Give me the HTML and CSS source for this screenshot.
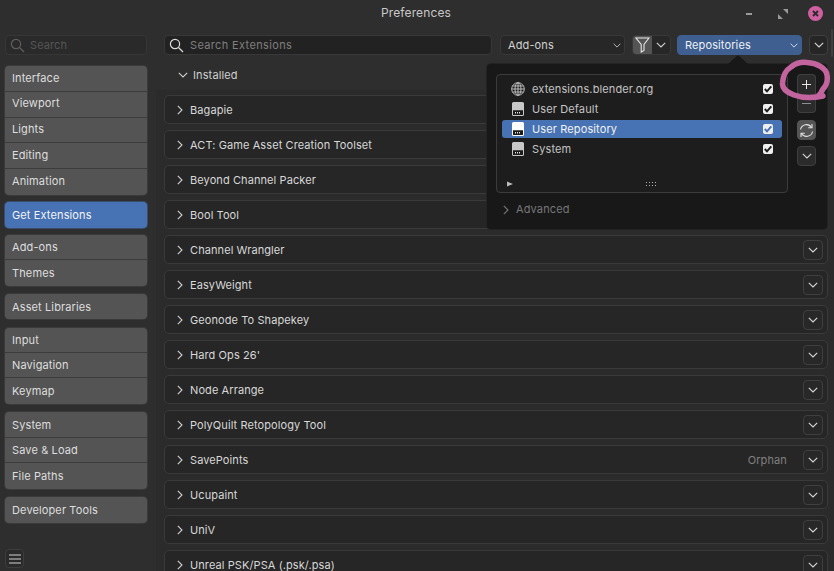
FILE: index.html
```html
<!DOCTYPE html>
<html lang="en">
<head>
<meta charset="utf-8">
<title>Preferences</title>
<link rel="stylesheet" href="styles.css">
</head>
<body>
<svg class="defs" width="0" height="0">
  <symbol id="down" viewBox="0 0 10 6"><path d="M.8.8 5 5 9.200.8" fill="none" stroke="currentColor" stroke-width="1.100"/></symbol>
  <symbol id="right" viewBox="0 0 6 10"><path d="M.8.8 5 5 .8 9.200" fill="none" stroke="currentColor" stroke-width="1.100"/></symbol>
  <symbol id="search" viewBox="0 0 15 15"><circle cx="6" cy="6" r="4.600" fill="none" stroke="currentColor" stroke-width="1.200"/><path d="m9.500 9.500 4.500 4.500" stroke="currentColor" stroke-width="1.300"/></symbol>
  <symbol id="disk" viewBox="0 0 12 14"><path d="M1.500 0h9A1.500 1.500 0 0 1 12 1.500v11a1.500 1.500 0 0 1-1.500 1.500h-9A1.500 1.500 0 0 1 0 12.500v-11A1.500 1.500 0 0 1 1.500 0z" fill="currentColor"/><path d="M1 8.300h10V12.500a.5.5 0 0 1-.5.5h-9a.5.5 0 0 1-.5-.5z" fill="#1b1b1b"/><path d="M3 10h1v1.600H3zM5 10h1v1.600H5zM7 10h1v1.600H7z" fill="#e6e6e6"/></symbol>
  <symbol id="check" viewBox="0 0 10 10"><path d="M1.800 5 4 7.400 8.300 2.400" fill="none" stroke="currentColor" stroke-width="1.900"/></symbol>
</svg>
<div class="window">
  <header class="titlebar">
    <h1 class="title">Preferences</h1>
    <div class="winctl">
      <svg class="ctl" width="12" height="12" viewBox="0 0 12 12"><path d="M0 6h6" stroke="#9a9a9a" stroke-width="2"/></svg>
      <svg class="ctl" width="12" height="12" viewBox="0 0 12 12"><path d="M6 1h5v5zM1 6v5h5z" fill="#9a9a9a"/></svg>
      <svg class="close" width="15" height="15" viewBox="0 0 15 15"><circle cx="7.500" cy="7.500" r="7.500" fill="#cf609f"/><path d="m5 5 5 5m0-5-5 5" stroke="#2a2a2a" stroke-width="1.800"/></svg>
    </div>
  </header>
  <div class="body">
    <aside class="sidebar">
      <div class="field side-search">
        <svg class="ico-search" width="15" height="15"><use href="#search"/></svg>
        <span class="ph">Search</span>
      </div>
      <nav class="tabs">
        <div class="group first"><span class="tab">Interface</span><span class="tab">Viewport</span><span class="tab">Lights</span><span class="tab">Editing</span><span class="tab">Animation</span></div>
        <div class="group active"><span class="tab">Get Extensions</span></div>
        <div class="group"><span class="tab">Add-ons</span><span class="tab">Themes</span></div>
        <div class="group"><span class="tab">Asset Libraries</span></div>
        <div class="group"><span class="tab">Input</span><span class="tab">Navigation</span><span class="tab">Keymap</span></div>
        <div class="group system"><span class="tab">System</span><span class="tab">Save &amp; Load</span><span class="tab">File Paths</span></div>
        <div class="group dev"><span class="tab">Developer Tools</span></div>
      </nav>
      <button class="menu-btn" aria-label="Menu"><svg width="12" height="10" viewBox="0 0 12 10"><path d="M0 1h12M0 5h12M0 9h12" stroke="#d0d0d0" stroke-width="1"/></svg></button>
    </aside>
    <main class="main">
      <div class="toolbar">
        <div class="field main-search">
          <svg class="ico-search bright" width="15" height="15"><use href="#search"/></svg>
          <span class="ph">Search Extensions</span>
        </div>
        <div class="field select addons"><span>Add-ons</span><svg class="chev" width="8" height="5"><use href="#down"/></svg></div>
        <div class="filter">
          <span class="filter-ico"><svg width="15" height="16" viewBox="0 0 15 16"><path d="M1 1h13L9 7.500V13.500L6.200 15V7.500z" fill="none" stroke="#e6e6e6" stroke-width="1.100"/></svg></span>
          <span class="filter-more"><svg width="10" height="6"><use href="#down"/></svg></span>
        </div>
        <div class="field select repos"><span>Repositories</span><svg class="chev" width="8" height="5"><use href="#down"/></svg></div>
        <button class="icon-btn top-more"><svg width="10" height="6"><use href="#down"/></svg></button>
      </div>
      <div class="section-head"><svg width="10" height="6"><use href="#down"/></svg><span>Installed</span></div>
      <div class="rows">
        <div class="row"><svg class="r-chev" width="6" height="10"><use href="#right"/></svg><span class="r-name">Bagapie</span><button class="icon-btn"><svg width="10" height="6"><use href="#down"/></svg></button></div>
        <div class="row"><svg class="r-chev" width="6" height="10"><use href="#right"/></svg><span class="r-name">ACT: Game Asset Creation Toolset</span><button class="icon-btn"><svg width="10" height="6"><use href="#down"/></svg></button></div>
        <div class="row"><svg class="r-chev" width="6" height="10"><use href="#right"/></svg><span class="r-name">Beyond Channel Packer</span><button class="icon-btn"><svg width="10" height="6"><use href="#down"/></svg></button></div>
        <div class="row"><svg class="r-chev" width="6" height="10"><use href="#right"/></svg><span class="r-name">Bool Tool</span><button class="icon-btn"><svg width="10" height="6"><use href="#down"/></svg></button></div>
        <div class="row"><svg class="r-chev" width="6" height="10"><use href="#right"/></svg><span class="r-name">Channel Wrangler</span><button class="icon-btn"><svg width="10" height="6"><use href="#down"/></svg></button></div>
        <div class="row"><svg class="r-chev" width="6" height="10"><use href="#right"/></svg><span class="r-name">EasyWeight</span><button class="icon-btn"><svg width="10" height="6"><use href="#down"/></svg></button></div>
        <div class="row"><svg class="r-chev" width="6" height="10"><use href="#right"/></svg><span class="r-name">Geonode To Shapekey</span><button class="icon-btn"><svg width="10" height="6"><use href="#down"/></svg></button></div>
        <div class="row"><svg class="r-chev" width="6" height="10"><use href="#right"/></svg><span class="r-name">Hard Ops 26'</span><button class="icon-btn"><svg width="10" height="6"><use href="#down"/></svg></button></div>
        <div class="row"><svg class="r-chev" width="6" height="10"><use href="#right"/></svg><span class="r-name">Node Arrange</span><button class="icon-btn"><svg width="10" height="6"><use href="#down"/></svg></button></div>
        <div class="row"><svg class="r-chev" width="6" height="10"><use href="#right"/></svg><span class="r-name">PolyQuilt Retopology Tool</span><button class="icon-btn"><svg width="10" height="6"><use href="#down"/></svg></button></div>
        <div class="row"><svg class="r-chev" width="6" height="10"><use href="#right"/></svg><span class="r-name">SavePoints</span><span class="r-note">Orphan</span><button class="icon-btn"><svg width="10" height="6"><use href="#down"/></svg></button></div>
        <div class="row"><svg class="r-chev" width="6" height="10"><use href="#right"/></svg><span class="r-name">Ucupaint</span><button class="icon-btn"><svg width="10" height="6"><use href="#down"/></svg></button></div>
        <div class="row"><svg class="r-chev" width="6" height="10"><use href="#right"/></svg><span class="r-name">UniV</span><button class="icon-btn"><svg width="10" height="6"><use href="#down"/></svg></button></div>
        <div class="row"><svg class="r-chev" width="6" height="10"><use href="#right"/></svg><span class="r-name">Unreal PSK/PSA (.psk/.psa)</span><button class="icon-btn"><svg width="10" height="6"><use href="#down"/></svg></button></div>
      </div>
    </main>
  </div>

  <i class="thumb"></i>

  <section class="popup">
    <div class="popup-top">
      <div class="listbox">
        <div class="lrow"><svg class="globe" width="14" height="14" viewBox="0 0 14 14"><g fill="none" stroke="#c8c8c8" stroke-width=".9"><circle cx="7" cy="7" r="6.300"/><ellipse cx="7" cy="7" rx="3" ry="6.300"/><path d="M7 .7v12.600M.7 7h12.600M1.500 4h11M1.500 10h11"/></g></svg><span class="lname">extensions.blender.org</span><span class="cb"><svg width="10" height="10"><use href="#check"/></svg></span></div>
        <div class="lrow"><svg class="disk" width="12" height="14"><use href="#disk"/></svg><span class="lname">User Default</span><span class="cb"><svg width="10" height="10"><use href="#check"/></svg></span></div>
        <div class="lrow sel"><svg class="disk" width="12" height="14"><use href="#disk"/></svg><span class="lname">User Repository</span><span class="cb"><svg width="10" height="10"><use href="#check"/></svg></span></div>
        <div class="lrow"><svg class="disk" width="12" height="14"><use href="#disk"/></svg><span class="lname">System</span><span class="cb"><svg width="10" height="10"><use href="#check"/></svg></span></div>
        <div class="lfoot">
          <svg class="tri" width="6" height="6" viewBox="0 0 6 6"><path d="M0 .5 6 3 0 5.500z" fill="#bdbdbd"/></svg>
          <svg class="grip" width="11" height="5" viewBox="0 0 11 5"><path d="M0 0h1v1H0zM3 0h1v1H3zM6 0h1v1H6zM9 0h1v1H9zM0 3h1v1H0zM3 3h1v1H3zM6 3h1v1H6zM9 3h1v1H9z" fill="#b0b0b0"/></svg>
        </div>
      </div>
      <div class="side-btns">
        <div class="pair">
          <button class="icon-btn pb"><svg width="9" height="9" viewBox="0 0 9 9"><path d="M4.500 0v9M0 4.500h9" stroke="#e8e8e8" stroke-width="1"/></svg></button>
          <button class="icon-btn pb"><svg width="9" height="9" viewBox="0 0 9 9"><path d="M0 4.500h9" stroke="#8f8f8f" stroke-width="1"/></svg></button>
        </div>
        <button class="icon-btn pb refresh"><svg width="15" height="15" viewBox="0 0 15 15"><g fill="none" stroke="#e4e4e4" stroke-width="1.100"><path d="M1.500 6.500A6 6 0 0 1 12.500 4.500"/><path d="M13.500 8.500A6 6 0 0 1 2.500 10.500"/><path d="M13 1v3.800H9.200"/><path d="M2 14v-3.800h3.800"/></g></svg></button>
        <button class="icon-btn pb"><svg width="10" height="6"><use href="#down"/></svg></button>
      </div>
    </div>
    <div class="advanced"><svg width="6" height="10"><use href="#right"/></svg><span>Advanced</span></div>
    <i class="notch"></i>
  </section>

  <svg class="scribble" width="60" height="50" viewBox="0 0 60 50"><path d="M46 37C36 39 25 39 17 36 9 33 5 29 5.500 24 6 16 9 11 14 8 19 4 25 3 30 3.500 40 4 49 9 50 16 51 22 49 27 46 30 44 33 44 35 42 36" fill="none" stroke="#c4649e" stroke-width="5.500" stroke-linecap="round"/></svg>
</div>
</body>
</html>
```
FILE: styles.css
```css
* { box-sizing: border-box; }
html, body { margin: 0; height: 100%; }
body { background: #2e2e2e; color: #d8d8d8; font: 11px/1.2 Inter, "Liberation Sans", sans-serif; overflow: hidden; }
.defs { position: absolute; }
button { font: inherit; color: inherit; margin: 0; padding: 0; }

.window { position: relative; width: 834px; height: 571px; overflow: hidden; display: flex; flex-direction: column; }

.titlebar { height: 27px; flex: none; display: flex; align-items: center; justify-content: center; position: relative; background: #2e2e2e; }
.title { margin: 0 2px 0 0; font-size: 12px; font-weight: 400; color: #c8c8c8; letter-spacing: .12px; }
.winctl { position: absolute; top: 6px; right: 11px; display: flex; align-items: center; gap: 19px; }
.ctl { color: #9a9a9a; }

.body { flex: 1; display: flex; min-height: 0; }

.sidebar { width: 156px; flex: none; padding: 8px 9px 3px 5px; display: flex; flex-direction: column; }
.field { height: 20px; display: flex; align-items: center; background: #232323; border: 1px solid #383838; border-radius: 4px; flex: none; }
.side-search { background: #2a2a2a; border-color: #363636; padding-left: 4px; gap: 5px; }
.side-search .ico-search { color: #5f5f5f; }
.side-search .ph { color: #565656; letter-spacing: .1px; }
.ph { color: #7f7f7f; letter-spacing: .35px; padding-top: 1.500px; }
.ico-search { width: 15px; height: 15px; flex: none; color: #8a8a8a; }
.ico-search.bright { color: #dcdcdc; }

.tabs { margin-top: 11px; display: flex; flex-direction: column; gap: 8.270px; }
.group { display: flex; flex-direction: column; background: #545454; border-radius: 4px; box-shadow: 0 0 0 1px #3a3a3a; overflow: hidden; }
.tab { height: 25.400px; display: flex; align-items: center; padding: 1.500px 0 0 7px; color: #dedede; letter-spacing: .12px; border-bottom: 1px solid #3c3c3c; }
.tab:last-child { border-bottom: 0; }
.group.first .tab { height: 25.750px; padding: 0 0 .5px 7px; }
.group.active { background: #4772b3; box-shadow: 0 0 0 1px #3a4d69; margin: -.75px 0 -1px; }
.group.active .tab { color: #f4f4f4; }
.group.system { margin-top: .4px; }
.group.dev { margin-top: .6px; }

.menu-btn { margin-top: auto; width: 19px; height: 19px; background: #2a2a2a; border: 1px solid #3d3d3d; border-radius: 4px; display: flex; align-items: center; justify-content: center; }

.main { flex: 1; min-width: 0; display: flex; flex-direction: column; }
.toolbar { height: 20px; margin-top: 8px; padding: 0 6px 0 8px; display: flex; align-items: stretch; flex: none; }
.main-search { width: 328px; padding-left: 4px; gap: 6px; background: #222; }
.select { padding: 1px 3px 0 7px; justify-content: space-between; color: #d2d2d2; letter-spacing: .12px; }
.chev { color: #c8c8c8; }
.addons { width: 125px; margin-left: 8px; background: #272727; }
.filter { width: 39px; flex: none; margin-left: 7px; display: flex; border: 1px solid #383838; border-radius: 4px; overflow: hidden; background: #272727; }
.filter-ico { width: 19px; background: #545454; display: flex; align-items: center; justify-content: center; }
.filter-more { flex: 1; display: flex; align-items: center; justify-content: center; color: #d0d0d0; }
.repos { width: 125px; margin-left: 6px; background: #3f5f91; border-color: #3f5f91; color: #eef1f6; }
.repos .chev { color: #e4e8ef; }
.icon-btn { width: 20px; height: 20px; flex: none; display: flex; align-items: center; justify-content: center; background: #282828; border: 1px solid #3f3f3f; border-radius: 4px; color: #d8d8d8; }
.top-more { width: 19px; height: 20px; margin-left: 7px; background: #262626; }

.section-head { height: 35px; flex: none; padding: 7px 0 0 22px; display: flex; align-items: center; gap: 5px; color: #d0d0d0; letter-spacing: .12px; }
.section-head svg { color: #d0d0d0; margin-bottom: 2px; }

.rows { flex: 1; min-height: 0; padding: 5px 6px 0 8px; background: #2b2b2b; display: flex; flex-direction: column; gap: 6px; overflow: hidden; }
.row { height: 29px; flex: none; display: flex; align-items: center; padding: 0 4px 0 12px; background: #262626; border: 1px solid #3a3a3a; border-radius: 5px; }
.r-chev { color: #d0d0d0; margin-right: 7px; }
.r-name { flex: 1; color: #d8d8d8; letter-spacing: .09px; padding-top: 1.500px; }
.r-note { color: #808080; margin-right: 16px; letter-spacing: .12px; padding-top: 1.500px; }

.thumb { position: absolute; right: 1px; top: 29px; width: 2px; height: 28px; border-radius: 1px; background: #404040; }

.popup { position: absolute; left: 487px; top: 64px; width: 340px; height: 165px; background: #181818; border-radius: 4px; box-shadow: 0 0 0 1px #232323; padding: 10px 9px 0; }
.notch { position: absolute; left: 241px; top: -9px; width: 0; height: 0; border-left: 10px solid transparent; border-right: 10px solid transparent; border-bottom: 9px solid #181818; }
.popup-top { display: flex; align-items: flex-start; }
.listbox { width: 292px; height: 119px; background: #1d1d1d; border: 1px solid #3c3c3c; border-radius: 4px; padding: 5px 5px 0; display: flex; flex-direction: column; }
.lrow { height: 18px; flex: none; margin-bottom: 2px; display: flex; align-items: center; padding: 0 9px 0 9px; border-radius: 3px; color: #c4c4c4; letter-spacing: .12px; }
.lname { flex: 1; padding-top: 1.500px; }
.globe { margin-right: 7px; }
.disk { color: #c8c8c8; margin: 0 8px 0 1px; }
.cb { width: 10px; height: 10px; background: #efefef; border-radius: 2px; display: flex; color: #1c1c1c; }
.lrow.sel { background: #4772b3; color: #f2f2f2; }
.lrow.sel .disk { color: #fff; }
.lrow.sel .cb { color: #4772b3; }
.lfoot { margin-top: 20px; height: 8px; display: flex; align-items: center; position: relative; padding-left: 5px; }
.grip { position: absolute; left: 144px; top: 2px; }
.side-btns { margin-left: 9px; display: flex; flex-direction: column; }
.pair { display: flex; flex-direction: column; }
.pb { width: 19px; height: 20px; background: #2b2b2b; }
.pair .pb:first-child { border-radius: 4px 4px 0 0; border-bottom: 0; height: 20px; }
.pair .pb:last-child { border-radius: 0 0 4px 4px; border-top: 0; height: 19px; }
.refresh { background: #545454; border-color: #545454; margin: 7px 0 6px; }
.advanced { margin-top: 10px; padding-left: 7px; height: 14px; display: flex; align-items: center; gap: 7px; color: #777; letter-spacing: .12px; }

.scribble { position: absolute; left: 777px; top: 59px; pointer-events: none; }
```
